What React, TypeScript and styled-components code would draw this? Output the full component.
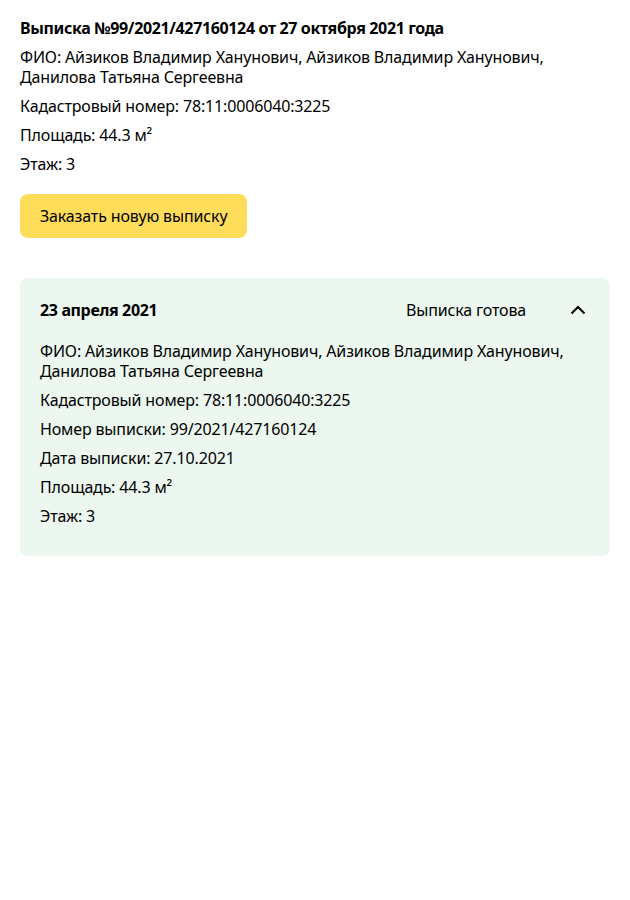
import React from "react";
import styled, { createGlobalStyle } from "styled-components";

const Global = createGlobalStyle`
  html, body { margin: 0; padding: 0; background: #fff; }
  body { font-family: "Noto Sans", "Open Sans", Arial, sans-serif; color: #000; -webkit-font-smoothing: antialiased; }
`;

const Page = styled.div`
  padding: 18px 20px 20px;
  display: flex;
  flex-direction: column;
`;

const Title = styled.div`
  font-size: 16px;
  line-height: 20px;
  font-weight: 700;
  letter-spacing: -0.36px;
`;

const Lines = styled.div`
  display: flex;
  flex-direction: column;
  gap: 9px;
`;

const Line = styled.div`
  font-size: 16px;
  line-height: 20px;
  letter-spacing: -0.15px;
`;

const Button = styled.button`
  align-self: flex-start;
  margin-top: 20px;
  height: 44px;
  padding: 0 20px;
  border: none;
  border-radius: 8px;
  background: #ffdd5a;
  font-family: inherit;
  font-size: 16px;
  letter-spacing: -0.15px;
  color: #000;
  cursor: pointer;
`;

const Card = styled.div`
  margin-top: 40px;
  background: #ebf7ef;
  border-radius: 8px;
  padding: 20px 20px 30px;
  display: flex;
  flex-direction: column;
  gap: 19px;
`;

const CardHeader = styled.div`
  display: flex;
  align-items: center;
  height: 24px;
`;

const DateText = styled.div`
  font-size: 16px;
  font-weight: 700;
  letter-spacing: -0.36px;
  flex: 1;
`;

const Status = styled.div`
  font-size: 16px;
  letter-spacing: -0.15px;
  margin-right: 44px;
`;

const Chevron = styled.svg`
  width: 16px;
  height: 16px;
  flex: none;
  margin-right: 4px;
`;

export default function App() {
  return (
    <>
      <Global />
      <Page>
        <Lines>
          <Title>Выписка №99/2021/427160124 от 27 октября 2021 года</Title>
          <Line>
            ФИО: Айзиков Владимир Ханунович, Айзиков Владимир Ханунович,
            <br />
            Данилова Татьяна Сергеевна
          </Line>
          <Line>Кадастровый номер: 78:11:0006040:3225</Line>
          <Line>Площадь: 44.3 м²</Line>
          <Line>Этаж: 3</Line>
        </Lines>
        <Button>Заказать новую выписку</Button>
        <Card>
          <CardHeader>
            <DateText>23 апреля 2021</DateText>
            <Status>Выписка готова</Status>
            <Chevron viewBox="0 0 16 16">
              <path d="M1.5 11.5 L8 5 L14.5 11.5" fill="none" stroke="#000" strokeWidth="2" />
            </Chevron>
          </CardHeader>
          <Lines>
            <Line>
              ФИО: Айзиков Владимир Ханунович, Айзиков Владимир Ханунович,
              <br />
              Данилова Татьяна Сергеевна
            </Line>
            <Line>Кадастровый номер: 78:11:0006040:3225</Line>
            <Line>Номер выписки: 99/2021/427160124</Line>
            <Line>Дата выписки: 27.10.2021</Line>
            <Line>Площадь: 44.3 м²</Line>
            <Line>Этаж: 3</Line>
          </Lines>
        </Card>
      </Page>
    </>
  );
}
